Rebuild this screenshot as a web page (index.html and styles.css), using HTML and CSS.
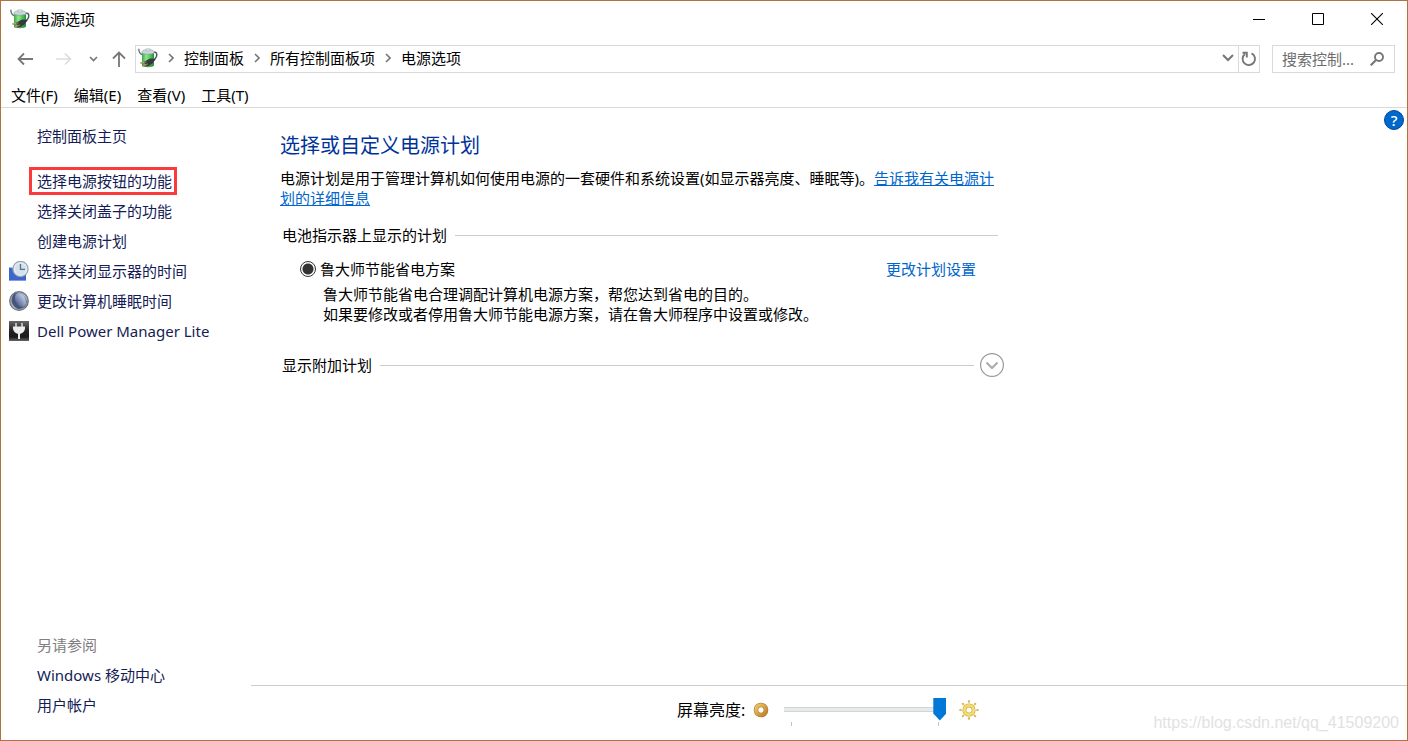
FILE: index.html
```
<!DOCTYPE html>
<html lang="zh-CN">
<head>
<meta charset="utf-8">
<title>电源选项</title>
<link rel="stylesheet" href="styles.css">
</head>
<body>
<svg class="defs" aria-hidden="true">
  <defs>
    <linearGradient id="green" x1="0" x2="1"><stop offset="0" stop-color="#3fa54a"/><stop offset=".35" stop-color="#8be886"/><stop offset=".7" stop-color="#4fc45a"/><stop offset="1" stop-color="#2d8a3c"/></linearGradient>
    <linearGradient id="steel" x1="0" x2="1" y1="0" y2="1"><stop offset="0" stop-color="#8a9098"/><stop offset=".5" stop-color="#b4bac0"/><stop offset="1" stop-color="#858b92"/></linearGradient>
    <linearGradient id="night" x1="0" x2="1" y1=".6" y2=".3"><stop offset="0" stop-color="#56658f"/><stop offset="1" stop-color="#c3d2f0"/></linearGradient>
    <linearGradient id="coal" x1="0" x2="0" y1="0" y2="1"><stop offset="0" stop-color="#666"/><stop offset=".5" stop-color="#222"/><stop offset=".8" stop-color="#1a1a1a"/><stop offset="1" stop-color="#666"/></linearGradient>
    <linearGradient id="gold" x1="0" x2="1" y1="0" y2="1"><stop offset="0" stop-color="#f0c660"/><stop offset="1" stop-color="#bd8128"/></linearGradient>
    <symbol id="power" viewBox="0 0 20 20">
      <path d="M.8.8c0 4 1.200 5.400 4.200 6.200" fill="none" stroke="#66757d" stroke-width="1.400"/>
      <path d="M15.500 4.500c3-.8 3.800 1.400 3 4-.8 2-2.500 3-3.500 5" fill="none" stroke="#4c5966" stroke-width="1.500"/>
      <path d="M4 4h12v13.500c-2 2.200-10 2.200-12 0z" fill="url(#green)"/>
      <path d="M4 15.500c3 1.600 9 1.600 12 0v2c-2 2.200-10 2.200-12 0z" fill="#2f8f40" opacity=".6"/>
      <path d="M4 3.500C5 1 15 1 16 3.500V5c-2 1.500-10 1.500-12 0z" fill="#ccd7db" stroke="#8c9ba1" stroke-width=".6"/>
      <path d="M8 .8h4V3H8z" fill="#dce5e8" stroke="#97a5aa" stroke-width=".5"/>
      <path d="M6.500 13.500L12 10.500l5.500.5-3 4.500-4 2.500-3.500.5z" fill="#35383c"/>
      <path d="M2.500 15l6-1M4.500 18l5.500-2" stroke="#7e6f4b" stroke-width="1.600"/>
      <path d="M3 14.700l3-.5M5 17.500l3-1" stroke="#d1c28d" stroke-width=".7"/>
    </symbol>
    <symbol id="crumb" viewBox="0 0 6 10"><path d="M1 1l4 4-4 4" fill="none" stroke="#777" stroke-width="1.600"/></symbol>
  </defs>
</svg>
<div class="window">
  <header class="titlebar">
    <svg class="icon"><use href="#power"/></svg>
    <h1 class="window-title">电源选项</h1>
    <div class="window-buttons">
      <button type="button" aria-label="最小化"><svg width="12" height="12"><path d="M0 6.500h12" stroke="#000"/></svg></button>
      <button type="button" aria-label="最大化"><svg width="12" height="12"><path d="M.5.5h11v11H.5z" fill="none" stroke="#000"/></svg></button>
      <button type="button" aria-label="关闭"><svg width="12" height="12"><path d="M0 0l12 12M12 0L0 12" stroke="#000" stroke-width="1.100"/></svg></button>
    </div>
  </header>

  <div class="toolbar">
    <nav class="history" aria-label="导航">
      <button type="button" aria-label="后退"><svg width="16" height="14"><path d="M16 7H2M7 1.500L1.500 7 7 12.500" fill="none" stroke="#777" stroke-width="1.800"/></svg></button>
      <button type="button" aria-label="前进"><svg width="16" height="14"><path d="M0 7h14M9 1.500L14.500 7 9 12.500" fill="none" stroke="#ddd" stroke-width="1.700"/></svg></button>
      <button type="button" class="recent" aria-label="最近"><svg width="9" height="6"><path d="M1 1l3.500 3.500L8 1" fill="none" stroke="#777" stroke-width="1.700"/></svg></button>
      <button type="button" class="up" aria-label="向上"><svg width="14" height="16"><path d="M7 16V2M1 7.500L7 1.500l6 6" fill="none" stroke="#777" stroke-width="1.800"/></svg></button>
    </nav>
    <div class="address">
      <svg class="icon"><use href="#power"/></svg>
      <svg class="crumb"><use href="#crumb"/></svg>
      <a href="#">控制面板</a>
      <svg class="crumb"><use href="#crumb"/></svg>
      <a href="#">所有控制面板项</a>
      <svg class="crumb"><use href="#crumb"/></svg>
      <a href="#">电源选项</a>
      <button type="button" class="drop" aria-label="历史记录"><svg width="12" height="8"><path d="M1 1l5 5 5-5" fill="none" stroke="#777" stroke-width="2"/></svg></button>
      <button type="button" class="refresh" aria-label="刷新"><svg width="16" height="16"><path d="M10.500 2.300A6.200 6.200 0 1 1 4 3M1.500 1.700h4.300V6.500" fill="none" stroke="#777" stroke-width="1.900"/></svg></button>
    </div>
    <form class="search">
      <input type="search" placeholder="搜索控制..." aria-label="搜索控制面板">
      <button type="button" aria-label="搜索"><svg width="14" height="14"><circle cx="9" cy="5" r="4" fill="none" stroke="#777" stroke-width="1.900"/><path d="M6 8L.7 13.300" stroke="#777" stroke-width="2.200"/></svg></button>
    </form>
  </div>

  <nav class="menu" aria-label="菜单">
    <button type="button">文件(F)</button>
    <button type="button">编辑(E)</button>
    <button type="button">查看(V)</button>
    <button type="button">工具(T)</button>
  </nav>

  <div class="body">
    <aside class="sidebar">
      <a class="home" href="#">控制面板主页</a>
      <ul class="tasks">
        <li><a class="marked" href="#">选择电源按钮的功能</a></li>
        <li><a href="#">选择关闭盖子的功能</a></li>
        <li><a href="#">创建电源计划</a></li>
        <li>
          <svg class="icon" viewBox="0 0 20 20"><path d="M0 6.500L17 10v9.500H0z" fill="#4672d8"/><path d="M0 6.500h5L17 15v4.500H0z" fill="#355fc4" opacity=".6"/><circle cx="11.500" cy="8" r="7.600" fill="#e4ebef" stroke="#93a6b4" stroke-width="1.200"/><circle cx="11.500" cy="8" r="5.500" fill="#d3e2ea"/><path d="M11.500 3v5.300h4.500" fill="none" stroke="#5d7080" stroke-width="1.300"/></svg>
          <a href="#">选择关闭显示器的时间</a>
        </li>
        <li>
          <svg class="icon" viewBox="0 0 20 20"><circle cx="10" cy="10" r="9.300" fill="url(#steel)" stroke="#6c737b" stroke-width="1.200"/><path d="M5 3C1 8 2 15 9 18c6 0 9-4 8.500-8C16 4 10 0 5 3z" fill="#47557e"/><ellipse cx="11.500" cy="9" rx="5" ry="7.300" transform="rotate(-28 11.500 9)" fill="url(#night)"/></svg>
          <a href="#">更改计算机睡眠时间</a>
        </li>
        <li>
          <svg class="icon" viewBox="0 0 20 20"><path d="M0 0h20v20H0z" fill="url(#coal)"/><path d="M7 2v4M13 2v4" stroke="#ddd" stroke-width="1.500"/><path d="M4 5.500h12v2c-.6 3.500-2.500 4.500-5 5.500V18H9v-5C6.500 12 4.600 11 4 7.500z" fill="#eee"/></svg>
          <a href="#">Dell Power Manager Lite</a>
        </li>
      </ul>
      <h2 class="see-also">另请参阅</h2>
      <a class="related" href="#">Windows 移动中心</a>
      <a class="related" href="#">用户帐户</a>
    </aside>

    <div class="pane">
      <div class="scroll">
        <main class="content">
          <h2>选择或自定义电源计划</h2>
          <p class="intro">电源计划是用于管理计算机如何使用电源的一套硬件和系统设置(如显示器亮度、睡眠等)。<a href="#">告诉我有关电源计划的详细信息</a></p>
          <section class="plans">
            <h3 class="rule">电池指示器上显示的计划</h3>
            <div class="plan">
              <input type="radio" id="plan" name="plan" checked>
              <label for="plan">鲁大师节能省电方案</label>
              <a href="#">更改计划设置</a>
            </div>
            <p class="about">鲁大师节能省电合理调配计算机电源方案，帮您达到省电的目的。<br>如果要修改或者停用鲁大师节能电源方案，请在鲁大师程序中设置或修改。</p>
          </section>
          <section class="extra">
            <h3 class="rule">显示附加计划</h3>
            <button type="button" aria-label="展开"><svg width="24" height="24"><circle cx="12" cy="12" r="11.400" fill="none" stroke="#999" stroke-width="1.200"/><path d="M6.500 9.500L12 15l5.500-5.500" fill="none" stroke="#aaa" stroke-width="2"/></svg></button>
          </section>
        </main>
        <button type="button" class="help" aria-label="帮助">?</button>
      </div>
      <footer class="brightness">
        <label for="brightness">屏幕亮度:</label>
        <svg class="dim" width="16" height="16"><circle cx="8" cy="8" r="5" fill="none" stroke="#a97633" stroke-width="4.600"/><circle cx="8" cy="8" r="5" fill="none" stroke="url(#gold)" stroke-width="3.600"/></svg>
        <div class="slider">
          <input type="range" id="brightness" min="0" max="100" value="100">
          <div class="ticks"></div>
        </div>
        <svg width="20" height="20"><g stroke="#d9b958" stroke-width="2.200" stroke-linecap="round"><path d="M10 1.200v.6M10 18.200v.6M1.200 10h.6M18.200 10h.6M3.800 3.800l.4.4M15.800 15.800l.4.4M3.800 16.200l.4-.4M15.800 4.200l.4-.4"/></g><circle cx="10" cy="10" r="4.600" fill="#fff" stroke="#cfa748" stroke-width="4"/><circle cx="10" cy="10" r="4.600" fill="none" stroke="#f3dc70" stroke-width="2.800"/></svg>
      </footer>
    </div>
  </div>
  <div class="watermark">https://blog.csdn.net/qq_41509200</div>
</div>
</body>
</html>
```

FILE: styles.css
```
* { box-sizing: border-box; }
body {
  margin: 0;
  background: #fff;
  color: #000;
  font: 15px/20px "Noto Sans", "Noto Sans CJK SC", sans-serif;
}
h1, h2, h3, p, ul { margin: 0; padding: 0; font-size: 15px; font-weight: 400; }
ul { list-style: none; }
a { color: inherit; text-decoration: none; }
svg { display: block; flex: none; }
button {
  display: flex;
  align-items: center;
  justify-content: center;
  padding: 0;
  border: 0;
  background: none;
  color: inherit;
  font: inherit;
}
.defs { position: absolute; width: 0; height: 0; }
.icon { width: 20px; height: 20px; }

.window {
  position: relative;
  display: flex;
  flex-direction: column;
  min-height: 100vh;
  border: 1px solid #b07340;
}

.titlebar { display: flex; align-items: center; height: 36px; padding-left: 9px; }
.window-title { margin-left: 5px; }
.window-buttons { display: flex; align-self: stretch; margin-left: auto; padding-right: 1px; }
.window-buttons button { width: 59px; }

.toolbar { display: flex; align-items: center; margin-top: 8px; padding: 0 12px 0 16px; }
.history { display: flex; align-items: center; width: 118px; }
.history button { height: 28px; margin-right: 23px; }
.history .recent { margin-left: -6px; margin-right: 14px; }
.history .up { margin-right: 0; }
.address {
  display: flex;
  flex: 1;
  align-items: center;
  height: 28px;
  padding: 0 0 2px 2px;
  border: 1px solid #d9d9d9;
}
.crumb { width: 6px; height: 10px; margin: 0 10px; }
.address .drop { width: 20px; height: 24px; margin-left: auto; }
.address .refresh { align-self: stretch; width: 21px; margin-bottom: -2px; border-left: 1px solid #d9d9d9; }
.search {
  display: flex;
  width: 123px;
  height: 28px;
  margin-left: 12px;
  padding: 0 10px 0 9px;
  border: 1px solid #d9d9d9;
}
.search input {
  flex: 1;
  min-width: 0;
  padding: 0;
  border: 0;
  outline: 0;
  background: none;
  font: inherit;
}
.search input::placeholder { color: #6d6d6d; opacity: 1; }

.menu {
  display: flex;
  gap: 16px;
  margin-top: 9px;
  padding: 3px 10px 2px;
  border-bottom: 1px solid #d9d9d9;
}

.body { display: flex; flex: 1; }
.sidebar {
  display: flex;
  flex-direction: column;
  width: 250px;
  padding: 13px 0 20px 8px;
  color: #151c55;
  line-height: 30px;
}
.home, .see-also, .related { padding-left: 28px; }
.tasks { margin: 15px 0 20px; }
.tasks li { display: flex; align-items: center; height: 30px; padding-left: 28px; }
.tasks .icon { margin: 0 8px 0 -28px; }
.tasks .marked {
  margin-left: -5px;
  padding: 0 2px 0 5px;
  outline: 3px solid #fb3b3b;
  line-height: 22px;
}
.see-also { margin-top: auto; color: #808080; line-height: 30px; }

.pane { display: flex; flex: 1; flex-direction: column; }
.scroll { display: flex; flex: 1; align-items: flex-start; justify-content: space-between; }
.content { max-width: 753px; padding: 24px 0 0 29px; }
.content h2 { color: #003399; font-size: 20px; line-height: 28px; }
.content a { color: #0066cc; }
.intro { max-width: 718px; margin-top: 8px; }
.intro a { text-decoration: underline; }
.plans { max-width: 718px; margin-top: 17px; }
.rule { display: flex; flex: 1; align-items: center; gap: 8px; padding-left: 2px; }
.rule::after { content: ""; flex: 1; height: 1px; background: #ccc; }
.plan { display: flex; align-items: center; margin-top: 14px; padding: 0 22px 0 20px; }
.plan input {
  appearance: none;
  width: 16px;
  height: 16px;
  margin: 0 4px 0 0;
  border: 1px solid #333;
  border-radius: 50%;
  background: radial-gradient(circle, #333 5px, #fff 6px);
}
.plan a { margin-left: auto; }
.about { margin-top: 5px; padding-left: 43px; }
.extra { display: flex; align-items: center; gap: 6px; width: 724px; margin-top: 29px; }
.help {
  width: 20px;
  height: 20px;
  margin: 2px 3px 0 0;
  border: 1px solid #004b99;
  border-radius: 50%;
  background: #0067cc;
  color: #fff;
  font-weight: 500;
}

.brightness {
  display: flex;
  align-items: center;
  height: 55px;
  padding: 0 0 7px 426px;
  border-top: 1px solid #ccc;
}
.brightness label { font-size: 16px; }
.dim { margin: 0 15px 0 8px; }
.slider { width: 162px; margin-right: 13px; padding-top: 4px; }
.slider input {
  display: block;
  appearance: none;
  width: 100%;
  height: 24px;
  margin: 0;
  background: linear-gradient(#e7eaea, #e7eaea) center / 100% 3px no-repeat,
    linear-gradient(#d2d5d5, #d2d5d5) center / 100% 5px no-repeat;
}
.slider input::-webkit-slider-thumb {
  appearance: none;
  width: 13px;
  height: 23px;
  background: #0078d7;
  clip-path: polygon(0 0, 100% 0, 100% 70%, 50% 100%, 0 70%);
}
.ticks { height: 4px; margin: 1px 7px 0; border: solid #c4c4c4; border-width: 0 1px; }

.watermark {
  position: absolute;
  right: 8px;
  bottom: 7px;
  color: #e2e2e2;
  font: 16px/20px "Liberation Sans", sans-serif;
}
```
